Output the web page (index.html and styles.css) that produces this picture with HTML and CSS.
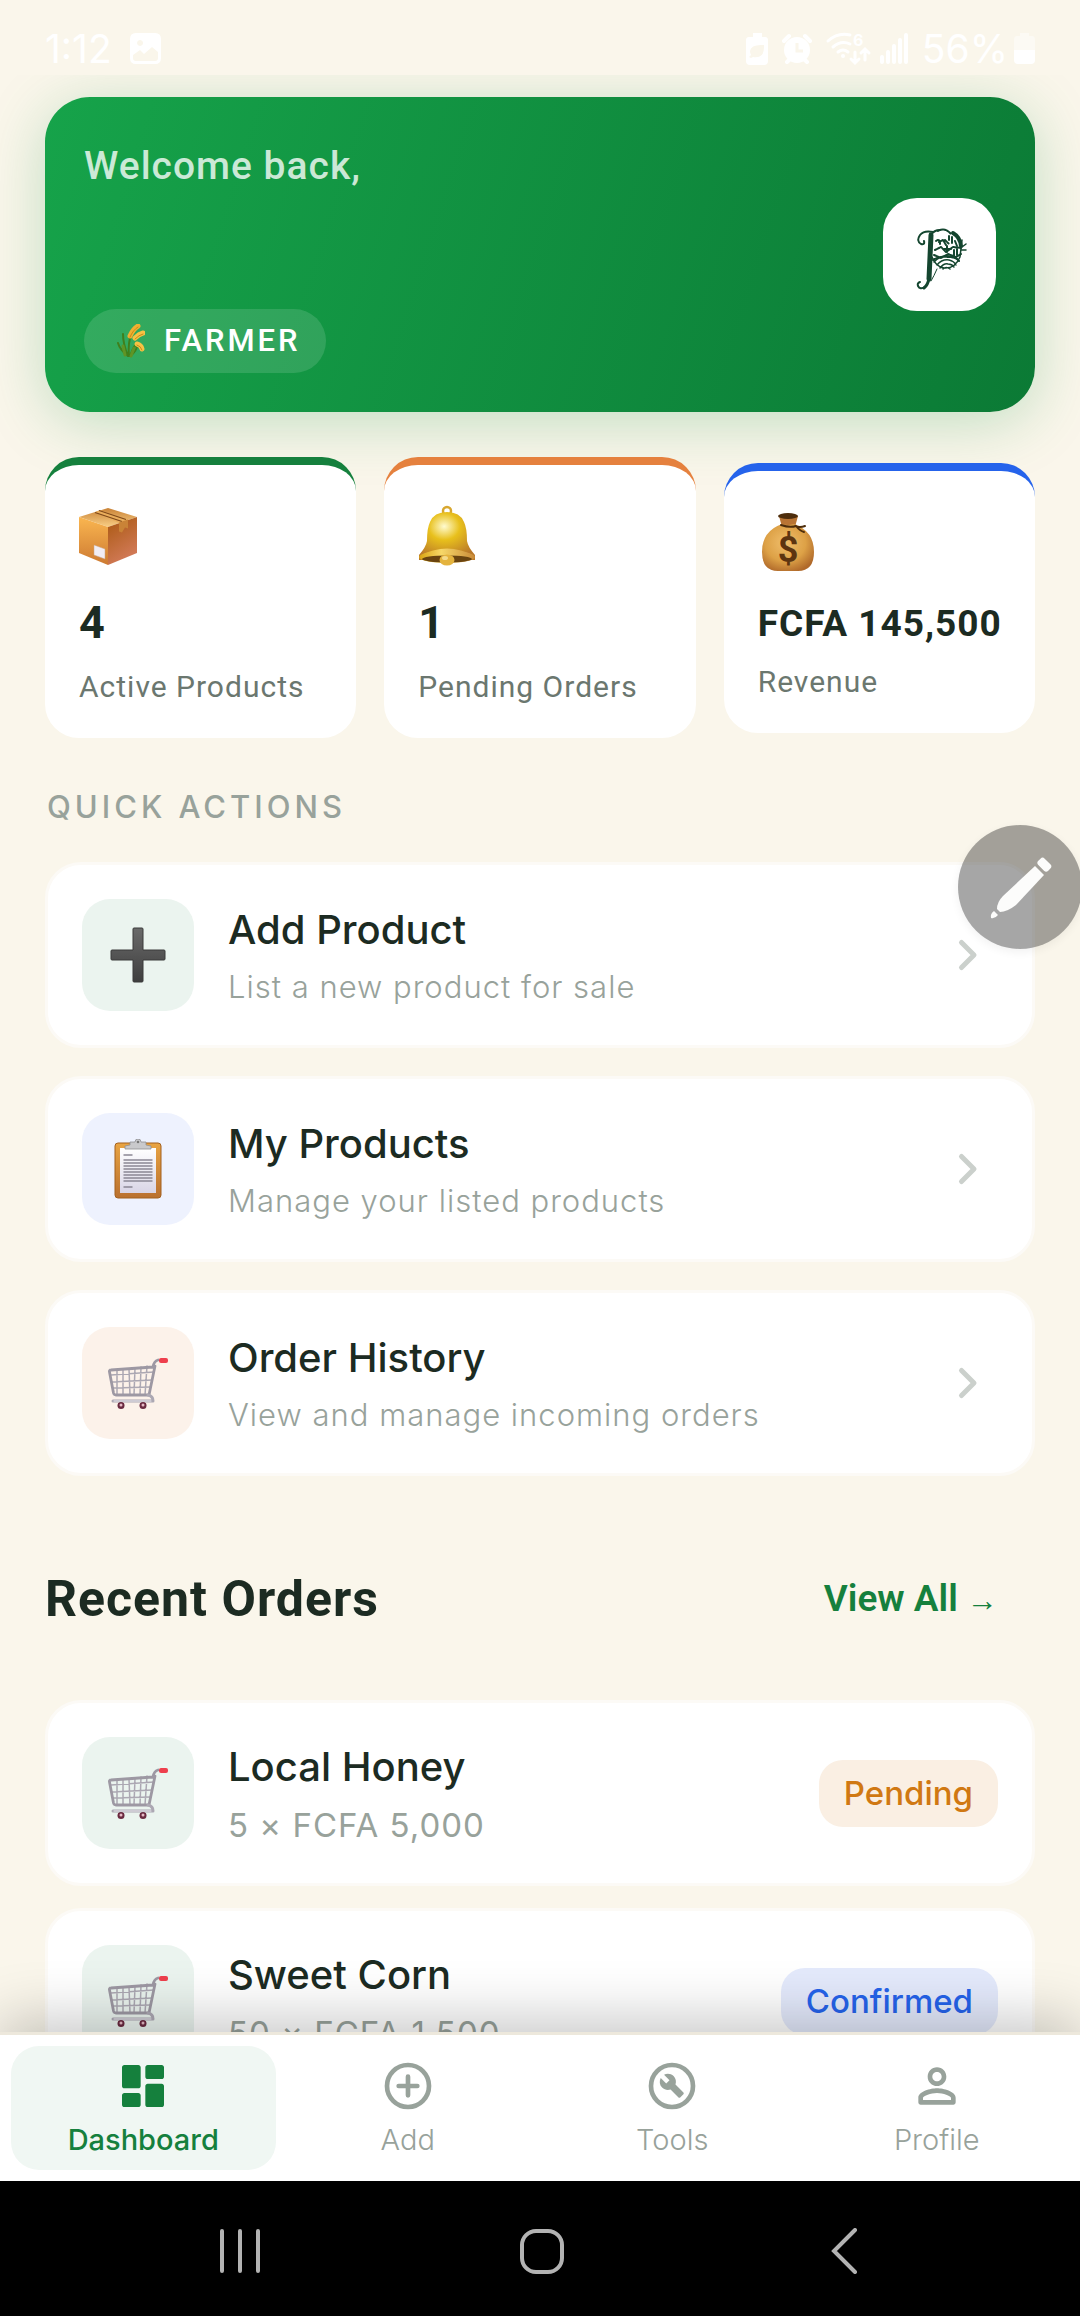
FILE: index.html
```html
<!DOCTYPE html>
<html lang="en">
<head>
<meta charset="utf-8">
<meta name="viewport" content="width=device-width, initial-scale=1">
<title>Farmer Dashboard</title>
<link rel="stylesheet" href="styles.css">
</head>
<body>
<svg class="defs" width="0" height="0" aria-hidden="true">
  <defs>
    <linearGradient id="boxTop" x1="0" y1="0" x2="0" y2="1"><stop offset="0" stop-color="#c98236"/><stop offset="1" stop-color="#f9cf85"/></linearGradient>
    <linearGradient id="boxLeft" x1="0" y1="0" x2="0" y2="1"><stop offset="0" stop-color="#fab650"/><stop offset="1" stop-color="#cd7a32"/></linearGradient>
    <linearGradient id="boxRight" x1="0" y1="0" x2="0.4" y2="1"><stop offset="0" stop-color="#a9580f"/><stop offset="1" stop-color="#d27a58"/></linearGradient>
    <radialGradient id="bellBody" cx="0.45" cy="0.3" r="0.7"><stop offset="0" stop-color="#fffbd0"/><stop offset="0.4" stop-color="#e8c01c"/><stop offset="1" stop-color="#b9782a"/></radialGradient>
    <linearGradient id="bellRim" x1="0" y1="0" x2="1" y2="0"><stop offset="0" stop-color="#d9a411"/><stop offset="0.4" stop-color="#f7d768"/><stop offset="1" stop-color="#c98a38"/></linearGradient>
    <radialGradient id="bag" cx="0.45" cy="0.4" r="0.65"><stop offset="0" stop-color="#f0be6c"/><stop offset="0.6" stop-color="#dda146"/><stop offset="1" stop-color="#b0692a"/></radialGradient>
    <linearGradient id="plusFill" x1="0" y1="0" x2="0" y2="1"><stop offset="0" stop-color="#6a6a6a"/><stop offset="1" stop-color="#3e3e3e"/></linearGradient>
    <linearGradient id="board" x1="0" y1="0" x2="0" y2="1"><stop offset="0" stop-color="#e9a442"/><stop offset="1" stop-color="#b9702f"/></linearGradient>
    <linearGradient id="paper" x1="0" y1="0" x2="0" y2="1"><stop offset="0" stop-color="#ffffff"/><stop offset="1" stop-color="#d9d5e6"/></linearGradient>
    <symbol id="cart" viewBox="0 0 60 52">
      <g fill="none" stroke="#aca8b3" stroke-linejoin="round" stroke-linecap="round">
        <path stroke-width="1.500" d="M9 13v24M15 12v26M21 12l1 26M27 11l-1 27M33 10l-1 28M39 9l-2 29M3 18l43-3M4 25l40-2M5 31l38-1"/>
        <path stroke-width="2.800" stroke="#9d98a3" d="M50 3q-4 1-5 7L3 13q-2 0-1.500 2l4 21q.500 2 2.500 2h33l6-29"/>
        <path stroke-width="3" d="M40 38q5 1 5 6H5"/>
        <path stroke-width="1" stroke="#f0eef4" d="M6 44h37"/>
      </g>
      <rect x="51" y="1" width="9" height="5" rx="2" fill="#ee3f4d"/>
      <g fill="#c23354"><path d="M10 46h6v3h-6zM32 46h6v3h-6z"/><circle cx="13" cy="48.500" r="3.500" fill="#6a2a40"/><circle cx="35" cy="48.500" r="3.500" fill="#6a2a40"/></g>
      <circle cx="13" cy="48" r="1.500" fill="#e6b9c4"/><circle cx="35" cy="48" r="1.500" fill="#e6b9c4"/>
    </symbol>
    <symbol id="chevron" viewBox="0 0 60 60"><path d="M23.500 17.500 36 30 23.500 42.500" fill="none" stroke="#cbd0cc" stroke-width="5" stroke-linecap="round" stroke-linejoin="round"/></symbol>
  </defs>
</svg>

<div class="app">
  <header class="status">
    <div class="status-group">
      <span class="status-time">1:12</span>
      <svg class="status-photo" viewBox="0 0 31 31" width="31" height="31"><path fill="#fff" fill-rule="evenodd" d="M6 0h19q6 0 6 6v19q0 6-6 6H6q-6 0-6-6V6q0-6 6-6zM10 7a3 3 0 1 0 .1 0zM3 22v3q0 3 3 3h19q3 0 3-3v-6l-6-5-8 7-4-4z"/></svg>
    </div>
    <div class="status-group status-right">
      <svg viewBox="0 0 22 32" width="22" height="32"><path fill="#fff" fill-rule="evenodd" d="M7 0h9v4h3q3 0 3 3v21q0 4-4 4H4q-4 0-4-4V7q0-3 3-3h4zM18 12q-13-1-14 6 0 2 1 4l-2 2 2 1 2-1q12 2 11-12z"/></svg>
      <svg viewBox="0 0 30 31" width="30" height="31"><circle cx="15" cy="17" r="13" fill="#fff"/><path d="M2 8l5-5M28 8l-5-5M5 29l4-4M25 29l-4-4" stroke="#fff" stroke-width="4" stroke-linecap="round"/><path d="M15 10v8h6" fill="none" stroke="#faf6eb" stroke-width="3"/></svg>
      <svg class="status-wifi" viewBox="0 0 44 33" width="44" height="33"><g fill="none" stroke="#fff" stroke-width="3" stroke-linecap="round"><path d="M2 9Q12 0 24 3M7 15q8-7 17-3M12 20q5-4 10 0"/><path d="M29 20v10M25 27l4 4 4-4M39 28V18M35 21l4-4 4 4"/></g><circle cx="17" cy="24" r="2" fill="#fff"/><text x="27" y="14" class="wifi-text">6</text></svg>
      <svg class="status-signal" viewBox="0 0 28 31" width="28" height="31"><path d="M2 24v5M8 19v10M14 13v16M20 7v22M26 2v27" stroke="#fff" stroke-width="4" stroke-linecap="round"/></svg>
      <span class="status-time">56%</span>
      <svg class="status-battery" viewBox="0 0 21 31" width="21" height="31"><path fill="#fff" opacity=".45" d="M6 0h9v3h3q3 0 3 4v10H0V7q0-4 3-4h3z"/><path fill="#fff" d="M0 17h21v10q0 4-4 4H4q-4 0-4-4z"/></svg>
    </div>
  </header>

  <main class="content">
    <section class="hero">
      <div class="hero-text">
        <p class="hero-greeting">Welcome back,</p>
        <span class="role">
          <svg viewBox="0 0 28 34" width="28" height="34"><g fill="none" stroke-linecap="round"><path stroke="#3f7f1c" stroke-width="2" d="M11 32Q6 20 6 10M11 32Q3 26 1 19M12 32Q11 22 13 14M13 32q3-8 6-12M13 32q7-5 7-11"/><path stroke="#5f9426" stroke-width="3" d="M8 31l-2-9M14 32l3-8"/><path stroke="#f0b030" stroke-width="5" d="M13 12q3-7 8-10"/><path stroke="#f7c244" stroke-width="5" d="M18 14q4-4 8-5M20 20q4 1 5 5"/><path stroke="#c98a18" stroke-width="1" d="M13 13q3-7 8-10M18 15q4-4 8-5M20 21q4 1 5 5"/></g></svg>
          FARMER
        </span>
      </div>
      <div class="brand">
        <svg viewBox="0 0 113 113" width="113" height="113" role="img" aria-label="Brand logo">
          <g fill="none" stroke="#14452f" stroke-linecap="round" stroke-linejoin="round">
            <path stroke-width="5" d="M48 37q-1 22-2 44"/>
            <path stroke-width="3" d="M46 80q-1 7-5 10"/>
            <path stroke-width="2" d="M42 89q-5 3-7-1-1-3 2-4M50 34q-9-2-13 3-4 6 1 9 4 1 3-3M48 37q3-5 9-5"/>
            <path stroke-width="1" d="M54 71q-3 7-6 12"/>
            <path stroke-width="4" d="M70 35q7 4 8 13"/>
            <path stroke-width="2" stroke-dasharray="2 1" d="M55 33q7-4 13 3M53 43q4-3 4 3M56 44l4-2 3 5M62 42l4 4M52 52l6-3 5 5 7-5 8 1M51 57l7 3 7-4 8 3 5-3M50 62q6-4 15-3 8 0 11 4"/>
            <path stroke-width="1.500" d="M51 64q6-7 15-6 7 1 10 5M54 67q5-6 12-5 5 1 7 5M57 70q4-5 8-4 4 0 6 3M60 71q3-3 7 0M79 42l-2 17q-5 12-16 11-8-1-12-11M79 49l4-3M78 52l5 0"/>
            <path stroke-width="2" d="M66 38v4M69 39v6M72 43l2 5M64 48v6M61 51h7M71 52v6M74 51v6"/>
          </g>
        </svg>
      </div>
    </section>

    <section class="stats" aria-label="Statistics">
      <article class="stat stat-green">
        <svg class="stat-icon" viewBox="0 -8 58 74" width="58" height="74"><path fill="url(#boxTop)" d="M29 1l29 9-29 10L0 10z"/><path fill="url(#boxLeft)" d="M0 10l29 10v38L0 46z"/><path fill="url(#boxRight)" d="M58 10L29 20v38l29-12z"/><path fill="#e9ad5c" d="M16 5l5-2 28 10-9 3z"/><path fill="none" stroke="#7e4818" stroke-width="1.200" d="M16 5.500l27 9M20 3.500l27 9"/><path fill="#c98337" d="M40 15.500l9-3v9l-3-1-3 5-3-1z"/><path fill="#f1edf4" stroke="#c9a58a" stroke-width=".5" d="M15 38l11 4v10l-11-4z"/></svg>
        <p class="stat-value">4</p>
        <p class="stat-label">Active Products</p>
      </article>
      <article class="stat stat-orange">
        <svg class="stat-icon" viewBox="0 -7 58 74" width="58" height="74"><circle cx="29" cy="5" r="4" fill="none" stroke="#d8a72f" stroke-width="2.500"/><path fill="url(#bellBody)" d="M29 6q13 0 17 10 3 6 3 19 1 6 8 14v5H1v-5q7-8 8-14 0-13 3-19Q16 6 29 6z"/><ellipse cx="29" cy="51" rx="28" ry="6" fill="url(#bellRim)"/><ellipse cx="29" cy="53" rx="25" ry="3.500" fill="#6a4410"/><path fill="url(#bellRim)" d="M1 50q28-15 56 0-28-7-56 0z"/><ellipse cx="29" cy="54" rx="7.500" ry="5.500" fill="#e4b33e"/><ellipse cx="27" cy="52" rx="3" ry="2" fill="#f5da8a"/></svg>
        <p class="stat-value">1</p>
        <p class="stat-label">Pending Orders</p>
      </article>
      <article class="stat stat-blue">
        <svg class="stat-icon" viewBox="0 -8 58 74" width="58" height="74"><path fill="#b87434" d="M21 3h19l-3 11H24z"/><ellipse cx="30" cy="3" rx="10" ry="3" fill="#4d2d0c"/><path fill="url(#bag)" d="M24 11q6 2 12 0 20 7 20 28 0 19-16 19H20Q4 58 4 39q0-21 20-28z"/><path fill="none" stroke="#4d2d0c" stroke-width="2" stroke-linecap="round" d="M23 12q9 3 15 1 4 5 8 6M37 13q5 2 10 0"/><text x="30" y="49" class="bag-sign">$</text></svg>
        <p class="stat-value stat-value-long">FCFA 145,500</p>
        <p class="stat-label">Revenue</p>
      </article>
    </section>

    <h2 class="eyebrow">QUICK ACTIONS</h2>
    <nav class="actions" aria-label="Quick actions">
      <a class="row" href="#add-product">
        <span class="tile tile-green"><svg viewBox="0 0 56 56" width="56" height="56"><path fill="url(#plusFill)" stroke="#3a3a3a" d="M24 1h8q1 0 1 1v21h21q1 0 1 1v8q0 1-1 1H33v21q0 1-1 1h-8q-1 0-1-1V33H2q-1 0-1-1v-8q0-1 1-1h21V2q0-1 1-1z"/></svg></span>
        <span class="row-text"><span class="row-title">Add Product</span><span class="row-sub">List a new product for sale</span></span>
        <svg class="chevron"><use href="#chevron"/></svg>
      </a>
      <a class="row" href="#my-products">
        <span class="tile tile-blue"><svg viewBox="0 0 48 60" width="48" height="60"><rect x="1" y="4" width="46" height="55" rx="3" fill="url(#board)" stroke="#a3611f"/><path fill="url(#paper)" d="M6 9h36v45H6z"/><path stroke="#8b8794" stroke-width="1.500" d="M9.500 16h9M9.500 48h9M9.500 21h29M9.500 24h29M9.500 27h29M9.500 30h29M9.500 33h29M9.500 36h29M9.500 39h29M9.500 42h29"/><path fill="#c9c9cc" stroke="#8f8f93" stroke-width=".8" d="M11 10V7l5-1V3h5q0-3 3-3t3 3h5v3l5 1v3z"/><circle cx="24" cy="3" r="1.300" fill="#777"/></svg></span>
        <span class="row-text"><span class="row-title">My Products</span><span class="row-sub">Manage your listed products</span></span>
        <svg class="chevron"><use href="#chevron"/></svg>
      </a>
      <a class="row" href="#order-history">
        <span class="tile tile-orange"><svg class="cart"><use href="#cart"/></svg></span>
        <span class="row-text"><span class="row-title">Order History</span><span class="row-sub">View and manage incoming orders</span></span>
        <svg class="chevron"><use href="#chevron"/></svg>
      </a>
    </nav>

    <section>
      <div class="section-head">
        <h2 class="section-title">Recent Orders</h2>
        <a class="view-all" href="#orders">View All <span class="arrow">→</span></a>
      </div>
      <div class="orders">
        <article class="row">
          <span class="tile tile-green"><svg class="cart"><use href="#cart"/></svg></span>
          <div class="row-text"><h3 class="row-title">Local Honey</h3><p class="row-price">5 × FCFA 5,000</p></div>
          <span class="badge badge-pending">Pending</span>
        </article>
        <article class="row">
          <span class="tile tile-green"><svg class="cart"><use href="#cart"/></svg></span>
          <div class="row-text"><h3 class="row-title">Sweet Corn</h3><p class="row-price">50 × FCFA 1,500</p></div>
          <span class="badge badge-confirmed">Confirmed</span>
        </article>
      </div>
    </section>
  </main>

  <nav class="tabs" aria-label="Main">
    <a class="tab tab-active" href="#dashboard" aria-current="page">
      <svg viewBox="0 0 24 24" width="56" height="56"><path fill="currentColor" d="M4 13h6c.55 0 1-.45 1-1V4c0-.55-.45-1-1-1H4c-.55 0-1 .45-1 1v8c0 .55.45 1 1 1zm0 8h6c.55 0 1-.45 1-1v-4c0-.55-.45-1-1-1H4c-.55 0-1 .45-1 1v4c0 .55.45 1 1 1zm10 0h6c.55 0 1-.45 1-1v-8c0-.55-.45-1-1-1h-6c-.55 0-1 .45-1 1v8c0 .55.45 1 1 1zM13 4v4c0 .55.45 1 1 1h6c.55 0 1-.45 1-1V4c0-.55-.45-1-1-1h-6c-.55 0-1 .45-1 1z"/></svg>
      Dashboard
    </a>
    <a class="tab" href="#add">
      <svg viewBox="0 0 24 24" width="56" height="56" fill="none" stroke="currentColor" stroke-width="2" stroke-linecap="round"><circle cx="12" cy="12" r="9"/><path d="M12 8v8M8 12h8"/></svg>
      Add
    </a>
    <a class="tab" href="#tools">
      <svg viewBox="0 0 24 24" width="56" height="56"><circle cx="12" cy="12" r="9" fill="none" stroke="currentColor" stroke-width="2"/><path fill="currentColor" fill-rule="evenodd" d="M13.490 11.380c.43-1.220.17-2.640-.81-3.620-1.110-1.110-2.790-1.300-4.100-.59l2.350 2.350-1.410 1.410-2.350-2.350c-.71 1.320-.52 2.990.59 4.100.98.980 2.400 1.240 3.620.81l3.410 3.410c.2.200.51.200.71 0l1.400-1.400c.2-.2.200-.51 0-.71l-3.410-3.410z"/></svg>
      Tools
    </a>
    <a class="tab" href="#profile">
      <svg viewBox="0 0 24 24" width="56" height="56"><path fill="currentColor" d="M12 6c1.100 0 2 .9 2 2s-.9 2-2 2-2-.9-2-2 .9-2 2-2m0 9c2.700 0 5.800 1.290 6 2v1H6v-1c.2-.71 3.300-2 6-2m0-11C9.790 4 8 5.790 8 8s1.790 4 4 4 4-1.790 4-4-1.790-4-4-4zm0 9c-2.670 0-8 1.340-8 4v2c0 .55.45 1 1 1h14c.55 0 1-.45 1-1v-2c0-2.660-5.330-4-8-4z"/></svg>
      Profile
    </a>
  </nav>

  <footer class="system">
    <button class="system-btn" aria-label="Recents"><svg viewBox="0 0 46 46" width="46" height="46"><path d="M5 3v40M23 3v40M41 3v40" stroke="#b3b3b3" stroke-width="4" stroke-linecap="round"/></svg></button>
    <button class="system-btn" aria-label="Home"><svg viewBox="0 0 46 46" width="46" height="46"><rect x="3" y="3" width="40" height="41" rx="14" fill="none" stroke="#b3b3b3" stroke-width="4"/></svg></button>
    <button class="system-btn" aria-label="Back"><svg viewBox="0 0 46 46" width="46" height="46"><path d="M34 2 13 23l21 21" fill="none" stroke="#b3b3b3" stroke-width="4" stroke-linecap="round"/></svg></button>
  </footer>

  <button class="fab" aria-label="Edit">
    <svg viewBox="0 0 124 124" width="124" height="124"><g fill="#fcfcfb"><rect x="82" y="33" width="9" height="14" rx="3" transform="rotate(-45 86 40)"/><path d="M77 41l9 9-28 30q-9 7-16 7l-3-3q0-7 6-13z"/><path d="M36 86l4 4q-3 4-7 3-1-4 3-7z"/></g></svg>
  </button>
</div>
</body>
</html>
```
FILE: styles.css
```css
* {
  box-sizing: border-box;
}

body {
  margin: 0;
  background: #faf6eb;
  color: #1c2b22;
  font-family: Inter, Roboto, sans-serif;
}

h2, h3, p {
  margin: 0;
}

a {
  color: inherit;
  text-decoration: none;
}

button {
  padding: 0;
  border: 0;
  background: none;
}

svg {
  display: block;
  flex: none;
}

.defs {
  position: absolute;
}

.app {
  position: relative;
  display: flex;
  flex-direction: column;
  height: 100vh;
  overflow: hidden;
}

/* Status bar */

.status {
  display: flex;
  flex: none;
  justify-content: space-between;
  align-items: center;
  height: 75px;
  padding: 22px 45px 0;
  color: #fff;
}

.status-group {
  display: flex;
  align-items: center;
  gap: 18px;
}

.status-right {
  gap: 14px;
}

.status-time {
  font-size: 39px;
  line-height: 44px;
}

.status-wifi {
  overflow: visible;
}

.status-signal {
  margin-left: -4px;
}

.status-battery {
  margin-left: -8px;
}

.wifi-text {
  fill: #fff;
  font-size: 16px;
  font-weight: 700;
}

/* Scrolling content */

.content {
  flex: 1;
  min-height: 0;
  padding: 22px 45px 0;
  overflow: auto;
  scrollbar-width: none;
}

.hero {
  display: flex;
  justify-content: space-between;
  align-items: center;
  min-height: 315px;
  padding: 39px;
  border-radius: 45px;
  background: linear-gradient(108deg, #16a34a, #0b7a35);
  box-shadow: 0 10px 60px rgba(22, 150, 70, 0.25);
}

.hero-text {
  display: flex;
  flex-direction: column;
  align-self: stretch;
  justify-content: space-between;
  align-items: flex-start;
}

.hero-greeting {
  color: rgba(255, 255, 255, 0.78);
  font: 500 39px/60px Roboto, sans-serif;
  letter-spacing: 1px;
}

.role {
  display: flex;
  align-items: center;
  gap: 19px;
  height: 64px;
  padding: 0 25px 0 33px;
  border-radius: 32px;
  background: rgba(255, 255, 255, 0.13);
  color: #fff;
  font: 500 31px/36px Roboto, sans-serif;
  letter-spacing: 3px;
}

.brand {
  border-radius: 34px;
  background: #fff;
}

.stats {
  display: grid;
  grid-template-columns: repeat(3, 1fr);
  align-items: center;
  gap: 28px;
  margin-top: 45px;
}

.stat {
  padding: 34px 0 33px 34px;
  border-top: 8px solid;
  border-radius: 34px;
  background: #fff;
}

.stat-green {
  border-color: #15803d;
}

.stat-orange {
  border-color: #e5813e;
}

.stat-blue {
  border-color: #2563eb;
}

.stat-icon {
  margin-bottom: 23px;
}

.bag-sign {
  fill: #5d3410;
  font: 700 36px Roboto, sans-serif;
  text-anchor: middle;
}

.stat-value {
  margin-bottom: 19px;
  color: #1c2b22;
  font: 700 45px/54px Roboto, sans-serif;
}

.stat-value-long {
  font-size: 37px;
  line-height: 43px;
  letter-spacing: 1px;
}

.stat-label {
  color: #6b776f;
  font: 400 30px/36px Roboto, sans-serif;
  letter-spacing: 1px;
}

.eyebrow {
  margin: 50px 0 36px 2px;
  color: #98a29b;
  font-size: 31px;
  font-weight: 500;
  line-height: 38px;
  letter-spacing: 4px;
}

.actions {
  display: grid;
  gap: 28px;
}

.row {
  display: flex;
  align-items: center;
  gap: 34px;
  padding: 34px;
  border: 3px solid #fcfaf6;
  border-radius: 36px;
  background: #fff;
}

.tile {
  display: grid;
  flex: none;
  place-items: center;
  width: 112px;
  height: 112px;
  border-radius: 28px;
}

.tile-green {
  background: #ebf4ef;
}

.tile-blue {
  background: #eef2fe;
}

.tile-orange {
  background: #fcf2ea;
}

.cart {
  width: 60px;
  height: 52px;
}

.row-text {
  display: flex;
  flex: 1;
  flex-direction: column;
  gap: 13px;
  min-width: 0;
}

.row-title {
  font-size: 40px;
  font-weight: 500;
  line-height: 50px;
}

.row-sub {
  color: #98a29b;
  font-size: 31px;
  font-weight: 300;
  line-height: 38px;
  letter-spacing: 1px;
}

.row-price {
  color: #98a29b;
  font-size: 33px;
  line-height: 40px;
  letter-spacing: 1px;
}

.chevron {
  width: 60px;
  height: 60px;
}

.section-head {
  display: flex;
  justify-content: space-between;
  align-items: center;
  margin: 93px 0 71px;
}

.section-title {
  font: 700 50px/60px Roboto, sans-serif;
  letter-spacing: 1px;
}

.view-all {
  padding-right: 37px;
  color: #15803d;
  font: 600 37px/44px Roboto, sans-serif;
}

.arrow {
  font-family: "Liberation Serif", serif;
  font-size: 31px;
  font-weight: 400;
  line-height: 36px;
}

.orders {
  display: grid;
  gap: 22px;
}

.badge {
  padding: 12px 25px;
  border-radius: 24px;
  font-size: 33px;
  font-weight: 500;
  line-height: 43px;
}

.badge-pending {
  background: #faefe3;
  color: #d07812;
}

.badge-confirmed {
  background: #e4eafc;
  color: #2563eb;
}

/* Bottom tabs */

.tabs {
  position: relative;
  display: grid;
  flex: none;
  grid-template-columns: repeat(4, 1fr);
  padding: 11px;
  border-top: 3px solid #ede8dc;
  background: #fff;
  box-shadow: 0 -11px 60px rgba(0, 0, 0, 0.23);
}

.tab {
  display: flex;
  flex-direction: column;
  align-items: center;
  gap: 8px;
  padding: 12px 0;
  border-radius: 28px;
  color: #98a29b;
  font-size: 29px;
  font-weight: 300;
  line-height: 36px;
}

.tab-active {
  background: #f0f7f3;
  color: #15803d;
  font-weight: 500;
}

/* System navigation */

.system {
  position: relative;
  display: flex;
  flex: none;
  justify-content: center;
  align-items: center;
  gap: 256px;
  height: 135px;
  padding: 4px 0 0 4px;
  background: #000;
}

.fab {
  position: absolute;
  top: 825px;
  right: -2px;
  border-radius: 50%;
  background: rgba(0, 0, 0, 0.35);
  box-shadow: 0 3px 10px rgba(0, 0, 0, 0.06);
}
```
